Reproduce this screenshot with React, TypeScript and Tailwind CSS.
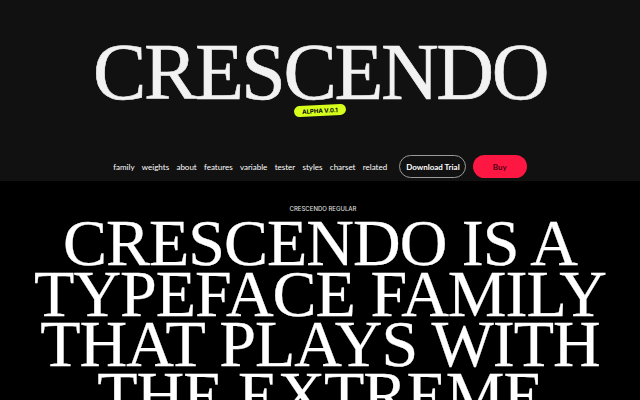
import React from 'react';

const navLinks = ['family', 'weights', 'about', 'features', 'variable', 'tester', 'styles', 'charset', 'related'];

const App: React.FC = () => {
  return (
    <div className="w-[640px] h-[400px] overflow-hidden bg-black text-white">
      {/* Header */}
      <header className="h-[181px] bg-[#111111] flex flex-col items-center">
        <h1 className="mt-[32px] text-[80px] leading-[80px] font-['Liberation_Serif',serif] text-[#f2f2f2] tracking-[-2.4px] [-webkit-text-stroke:0.6px_#f2f2f2]">
          CRESCENDO
        </h1>
        <span className="mt-[-7px] -rotate-3 bg-[#d7ff1c] text-black rounded-full px-[8px] py-[2px] text-[6px] leading-[7px] font-bold font-['Inter',sans-serif]">
          ALPHA V.0.1
        </span>

        <nav className="mt-[39px] flex items-center gap-[7.3px] font-['Lato',sans-serif] text-[8px] text-white">
          {navLinks.map(link => (
            <a key={link} className="leading-none">{link}</a>
          ))}
          <button className="ml-[5px] h-[23px] w-[67px] rounded-full border border-[#9a9a9a] text-[8px] font-bold text-white">
            Download Trial
          </button>
          <button className="ml-[-1px] h-[23px] w-[54px] rounded-full bg-[#ff1744] text-[8px] font-bold text-[#4a0010]">
            Buy
          </button>
        </nav>
      </header>

      {/* Intro */}
      <section className="flex flex-col items-center">
        <p className="mt-[25px] ml-[6px] text-[6px] leading-none font-['Inter',sans-serif] font-medium text-[#dddddd]">
          CRESCENDO REGULAR
        </p>
        <h2 className="mt-[6px] text-center text-[66px] leading-[50.5px] tracking-[-1px] font-['Liberation_Serif',serif] [-webkit-text-stroke:0.3px_white]">
          CRESCENDO IS A<br />
          TYPEFACE FAMILY<br />
          THAT PLAYS WITH<br />
          THE EXTREME
        </h2>
      </section>
    </div>
  );
};

export default App;
